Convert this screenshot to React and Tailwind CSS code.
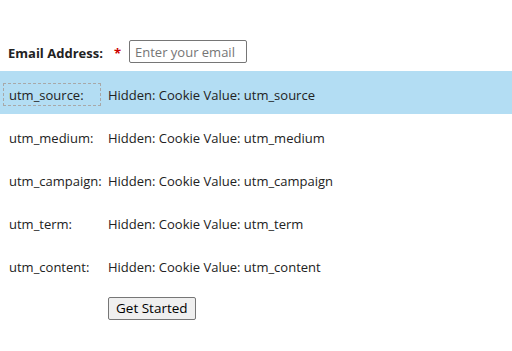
export default function App() {
  const rows = [
    ["utm_source:", "utm_source", true],
    ["utm_medium:", "utm_medium", false],
    ["utm_campaign:", "utm_campaign", false],
    ["utm_term:", "utm_term", false],
    ["utm_content:", "utm_content", false],
  ];
  return (
    <div className="w-[512px] h-[351px] bg-white text-[13px] text-[#222] overflow-hidden" style={{ fontFamily: '"Open Sans", sans-serif' }}>
      <div className="pt-[40px] flex items-center h-[63px]">
        <span className="pl-[8px] w-[114px] font-bold pt-[4px]">Email Address:</span>
        <span className="text-[#c00] w-[15px] font-bold pt-[4px]">*</span>
        <input
          className="w-[118px] h-[23px] border border-[#767676] rounded-[2px] px-[5px] pt-[1px] text-[13px] placeholder-[#757575] outline-none"
          placeholder="Enter your email"
        />
      </div>
      <div className="mt-[8px]">
        {rows.map(([label, val, hl]) => (
          <div key={label} className={`h-[43px] flex items-start pt-[12px] ${hl ? "bg-[#b3ddf3]" : ""}`}>
            <div className="ml-[3px] w-[98px] h-[23px]">
              <span className={`w-full h-full flex items-center pl-[5px] pt-[3px] ${hl ? "border border-dashed border-[#a8a8a8]" : "border border-transparent"}`}>{label}</span>
            </div>
            <div className="ml-[7px] h-[23px] flex items-center pt-[3px]">Hidden: Cookie Value: {val}</div>
          </div>
        ))}
      </div>
      <div className="pl-[108px] mt-[11px]">
        <button className="h-[23px] px-[7px] pt-[1px] bg-[#efefef] border border-[#767676] rounded-[2px] text-[13.5px] text-black leading-none">Get Started</button>
      </div>
    </div>
  );
}
